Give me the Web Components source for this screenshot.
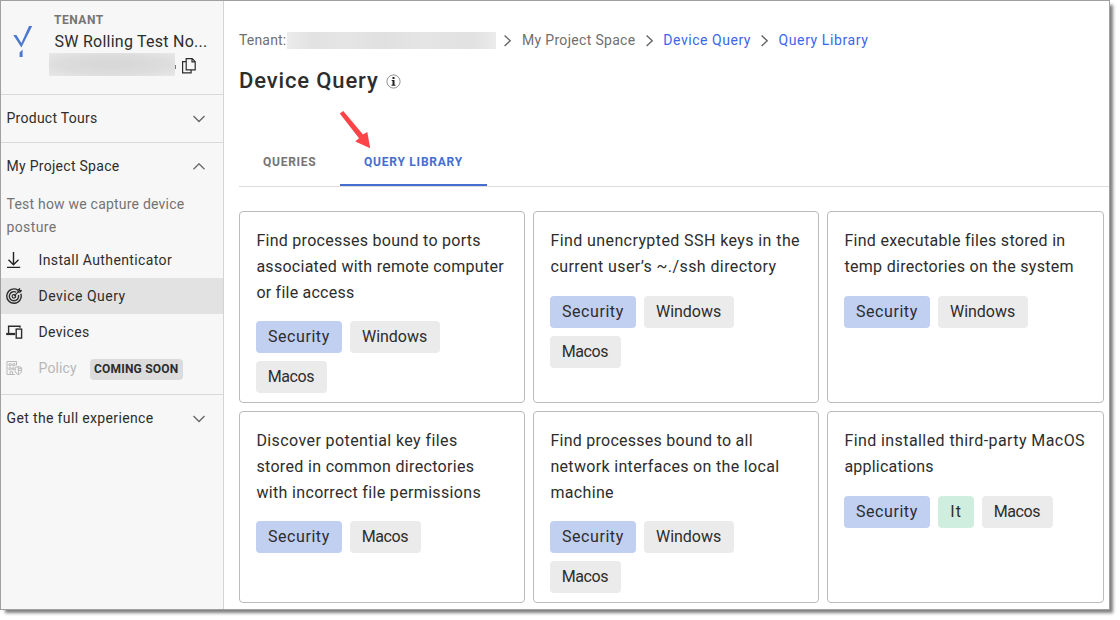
<!DOCTYPE html>
<html lang="en">
<head>
<meta charset="utf-8">
<title>Device Query</title>
<style>
html,body{margin:0;height:100%;background:#fff;overflow:hidden}
body{font-family:Roboto,"Liberation Sans",sans-serif;color:#2d2d2d;font-size:16px}
</style>
</head>
<body>
<app-frame></app-frame>
<script>
const define=(name,html,setup)=>customElements.define(name,class extends HTMLElement{
  constructor(){super();this.attachShadow({mode:'open'});}
  connectedCallback(){
    if(this.shadowRoot.childNodes.length)return;
    const t=document.createElement('template');t.innerHTML=html;
    this.shadowRoot.append(t.content.cloneNode(true));
    if(setup)setup(this,this.shadowRoot);
  }
});

/* A single line of text whose tracking is adjusted to occupy the width in "w". */
define('fit-text',`<style>:host{display:block;white-space:nowrap;flex:none}span{display:inline-block}</style><span><slot></slot></span>`,(el,root)=>{
  const s=root.querySelector('span'),w=+el.getAttribute('w'),n=el.textContent.length;
  el.style.width=w+'px';
  const natural=s.getBoundingClientRect().width;
  s.style.letterSpacing=((w-.8-natural)/(n-1)).toFixed(4)+'px';
});

const icons={
  down:'<svg width="14" height="8" viewBox="0 0 14 8"><path d="M1.5 1 7 6.5 12.5 1" fill="none" stroke="#666" stroke-width="1.3"/></svg>',
  up:'<svg width="14" height="8" viewBox="0 0 14 8"><path d="M1.5 6.2 7 .8 12.5 6.2" fill="none" stroke="#666" stroke-width="1.3"/></svg>',
  right:'<svg width="8" height="12" viewBox="0 0 8 12"><path d="M.6 .6 6.2 5.8 .6 11" fill="none" stroke="#666" stroke-width="1.4"/></svg>',
  install:'<svg width="16" height="18" viewBox="0 0 16 18" fill="none" stroke="#222" stroke-width="1.4"><path d="M7.5 1v12.2M2.5 8.7l5 5 5-5M1 16.4h13.2"/></svg>',
  query:'<svg width="16" height="16" viewBox="0 0 16 16" fill="none" stroke="#2d2d2d"><path stroke-width="1.4" d="M12 2.1A7.2 7.2 0 1 0 14.8 5.7M10.2 4.2A4.6 4.6 0 1 0 12.4 7"/><circle cx="7.9" cy="8.3" r="1.8" stroke-width="1.2"/><path stroke-width="1.2" d="m8 8.2 5-5M12 4.2V2.2L13.5.8V2.6H15.4L14 4.2Z"/></svg>',
  devices:'<svg width="17" height="16" viewBox="0 0 17 16" fill="none" stroke="#2d2d2d"><path d="M2.6 9V2.2H14M14 1.6V3.7" stroke-width="1.4"/><path d="M.2 10h9" stroke-width="2.2"/><rect x="10.2" y="5.1" width="5.4" height="9" stroke-width="1.4"/></svg>',
  policy:'<svg width="17" height="16" viewBox="0 0 17 16" fill="none" stroke="#b9b9b9" stroke-width="1"><path d="M10.5 5.5v-4H1v13h8M3 3.8h2.2v2H3zM6.8 3.8H9v2H6.8zM3 7.8h2.2v2H3zM6.8 7.8h1.2v2H6.8zM4.2 14.5v-2.8h2.4v2.8M12.4 6.5l3.2 1.2v2.9c0 2-1.2 3.2-3.2 4-2-.8-3.2-2-3.2-4V7.7zM12.4 6.7v7.6M12.6 8.7h2.4M12.6 10.5h2.4"/></svg>',
  copy:'<svg width="16" height="18" viewBox="0 0 16 18" fill="none" stroke="#2d2d2d" stroke-width="1.2"><path d="M5.2 1.6h6l3 3.1v8.1H5.2zM11 1.7v3.2h3.2M5 4.7H1.6v11.2h8.5v-3"/></svg>',
  info:'<svg width="15" height="15" viewBox="0 0 15 15"><circle cx="7.5" cy="7.5" r="6.6" fill="none" stroke="#777" stroke-width=".8"/><path fill="#222" d="M6.5 3h2v2h-2zM5.7 6h2.8v4.7h1v1h-4v-1h1V7h-.8z"/></svg>',
  logo:'<svg width="20" height="33" viewBox="0 0 20 33" fill="#4c78cf"><path d="M16 1h3.2L8.4 22.5.3 10h3.1l5 8.1zM9.6 24.6V32H6.6v-4.5z"/></svg>',
  arrow:'<svg width="34" height="42" viewBox="0 0 34 42"><path fill="#fb4447" d="M.8 3.6 4.3.9 24 24.5 28.3 22 31.2 38.2 16.3 31.4 20 28.2Z"/></svg>'
};
define('ui-icon','<style>:host{display:block;flex:none}svg{display:block}</style>',(el,root)=>{
  root.innerHTML+=icons[el.getAttribute('name')];
});

define('nav-section',`<style>
:host{display:block;border-top:1px solid #d9d9d9;font-size:14px}
header{display:flex;align-items:center;justify-content:space-between;height:47px;padding:0 17px 0 5.5px}
::slotted([slot=title]){margin-top:-2px}
</style><header><slot name="title"></slot><ui-icon></ui-icon></header><slot></slot>`,(el,root)=>{
  const i=document.createElement('ui-icon');i.setAttribute('name',el.hasAttribute('open')?'up':'down');
  root.querySelector('ui-icon').replaceWith(i);
});

define('nav-item',`<style>
:host{display:flex;align-items:center;height:36px;padding-left:5px;font-size:14px;box-sizing:border-box}
:host([active]){background:#e2e2e2}
:host([disabled]){color:#b7b7b7}
.i{width:32.5px;flex:none}
</style><div class="i"><slot name="icon"></slot></div><slot></slot>`);

define('side-bar',`<style>
:host{display:block;width:222px;background:#f7f7f7;border-right:1px solid #d4d4d4;flex:none}
.tenant{display:flex;height:93px;box-sizing:border-box;padding:12px 0 0 12px}
.logo{padding-top:12px;width:36px}
.label{font-size:12px;font-weight:700;color:#757575;line-height:14px;padding-left:5px}
.name{line-height:24px;margin-top:3px;padding-left:5.5px}
.id{display:flex;align-items:center;margin-top:-1px}
.id ui-icon{margin-top:2px}
.mask{width:126px;height:23px;background:radial-gradient(ellipse at 50% 50%,#d8d8d8 20%,#dddddd 60%,#e8e8e8 100%);position:relative;margin-right:6px}
.mask:after{content:"";position:absolute;left:126px;top:12px;width:1px;height:4px;background:#777}
.desc{color:#737373;line-height:23px;padding:3px 0 0 5.5px;height:49px}
.badge{background:#dcdcdc;color:#2d2d2d;border-radius:4px;font-size:12px;font-weight:700;line-height:20px;height:21px;padding:0 4px;margin-left:12.5px;margin-top:2px}
.end{height:8px}
</style>
<div class="tenant"><div class="logo"><ui-icon name="logo"></ui-icon></div><div>
<div class="label"><fit-text w="50">TENANT</fit-text></div>
<div class="name"><fit-text w="153.5">SW Rolling Test No...</fit-text></div>
<div class="id"><div class="mask"></div><ui-icon name="copy"></ui-icon></div></div></div>
<nav-section><fit-text slot="title" w="91.5">Product Tours</fit-text></nav-section>
<nav-section open><fit-text slot="title" w="113.5">My Project Space</fit-text>
<div class="desc"><fit-text w="178.5">Test how we capture device</fit-text><fit-text w="50.5">posture</fit-text></div>
<nav-item><ui-icon slot="icon" name="install"></ui-icon><fit-text w="134">Install Authenticator</fit-text></nav-item>
<nav-item active><ui-icon slot="icon" name="query"></ui-icon><fit-text w="87.5">Device Query</fit-text></nav-item>
<nav-item><ui-icon slot="icon" name="devices"></ui-icon><fit-text w="51.5">Devices</fit-text></nav-item>
<nav-item disabled><ui-icon slot="icon" name="policy"></ui-icon><fit-text w="39">Policy</fit-text><div class="badge"><fit-text w="85">COMING SOON</fit-text></div></nav-item>
<div class="end"></div></nav-section>
<nav-section><fit-text slot="title" w="147.5">Get the full experience</fit-text></nav-section>`);

define('bread-crumbs',`<style>
:host{display:flex;align-items:center;height:18px;font-size:14px;color:#6f6f6f}
fit-text{margin-top:-2px}
.mask{width:209px;height:17px;margin-top:-1px;background:linear-gradient(90deg,#ececec,#e2e2e2 12%,#e5e5e5 30%,#e0e0e0 45%,#e5e5e5 65%,#e1e1e1 88%,#ebebeb);margin-right:8px}
ui-icon{margin-top:-1px}
.link{color:#3b66ed}
.a{margin-left:9.5px;margin-right:9.8px}.b{margin-right:10px}
</style><fit-text w="48">Tenant:</fit-text><div class="mask"></div><ui-icon name="right" class="b"></ui-icon><fit-text w="114">My Project Space</fit-text><ui-icon name="right" class="a"></ui-icon><fit-text class="link" w="88">Device Query</fit-text><ui-icon name="right" class="a"></ui-icon><fit-text class="link" w="90">Query Library</fit-text>`);

define('tab-bar',`<style>
:host{display:flex;height:50px;box-sizing:border-box;border-bottom:1px solid #dcdcdc;font-size:12px;font-weight:700;color:#757575;position:relative}
div{height:47px;line-height:50px;padding:0 23.5px 0 24px}
.on{color:#456ed1;border-bottom:2px solid #456ed1;padding:0 24px}
.arrow{position:absolute;left:100px;top:-27px}
</style><div><fit-text w="53.5">QUERIES</fit-text></div><div class="on"><fit-text w="99">QUERY LIBRARY</fit-text></div><ui-icon class="arrow" name="arrow"></ui-icon>`);

define('tag-chip',`<style>
:host{display:flex;align-items:center;justify-content:center;height:32px;padding-bottom:2px;border-radius:4px;background:#ebebeb;box-sizing:border-box}
:host([kind=security]){background:#c1cff1}
:host([kind=it]){background:#d0eedf}
</style><slot></slot>`);

define('query-card',`<style>
:host{display:block;border:1px solid #bcbcbc;border-radius:4px;box-sizing:border-box;padding:16px;min-width:0}
.title{line-height:26px;padding-left:.4px}
.tags{display:flex;flex-wrap:wrap;gap:8px;margin-top:16px}
.long+.tags{margin-top:15px}
</style><div class="title"></div><div class="tags"></div>`,(el,root)=>{
  const card=cards[+el.getAttribute('index')];
  if(card.lines.length>2)root.querySelector('.title').classList.add('long');
  for(const [text,w] of card.lines){
    const f=document.createElement('fit-text');f.setAttribute('w',w);f.textContent=text;
    root.querySelector('.title').append(f);
  }
  for(const t of card.tags){
    const c=document.createElement('tag-chip'),f=document.createElement('fit-text');
    const [box,w]={Security:[86,62],Windows:[90,66],Macos:[71,47.5],It:[36,11.5]}[t];
    c.style.width=box+'px';c.setAttribute('kind',t.toLowerCase());
    f.setAttribute('w',w);f.textContent=t;c.append(f);
    root.querySelector('.tags').append(c);
  }
});
const cards=[
 {lines:[['Find processes bound to ports',225],['associated with remote computer',248],['or file access',98]],tags:['Security','Windows','Macos']},
 {lines:[['Find unencrypted SSH keys in the',250],['current user’s ~./ssh directory',226.5],],tags:['Security','Windows','Macos']},
 {lines:[['Find executable files stored in',221],['temp directories on the system',230]],tags:['Security','Windows']},
 {lines:[['Discover potential key files',201],['stored in common directories',218.5],['with incorrect file permissions',224.5]],tags:['Security','Macos']},
 {lines:[['Find processes bound to all',203],['network interfaces on the local',229.5],['machine',64]],tags:['Security','Windows','Macos']},
 {lines:[['Find installed third-party MacOS',241],['applications',90]],tags:['Security','It','Macos']}
];

define('query-page',`<style>
:host{display:block;flex:1;min-width:0;padding:31px 0 0 15px;box-sizing:border-box}
.head{display:flex;align-items:center;height:30px;margin:15px 0 42px;font-size:22px;font-weight:500}
.head ui-icon{margin:3px 0 0 7.5px}
.grid{display:grid;grid-template-columns:286px 286px 277px;grid-auto-rows:192px;gap:8px;padding-top:24px}
</style><bread-crumbs></bread-crumbs>
<div class="head"><fit-text w="139.5">Device Query</fit-text><ui-icon name="info"></ui-icon></div>
<tab-bar></tab-bar>
<div class="grid"></div>`,(el,root)=>{
  root.querySelector('.grid').innerHTML=cards.map((_,i)=>`<query-card index="${i}"></query-card>`).join('');
});

define('app-frame',`<style>
:host{display:flex;width:1110px;height:610px;box-sizing:border-box;border:1px solid #a0a0a0;background:#fff;box-shadow:4px 4px 3px -1px rgba(0,0,0,.5)}
</style><side-bar></side-bar><query-page></query-page>`);
</script>
</body>
</html>
